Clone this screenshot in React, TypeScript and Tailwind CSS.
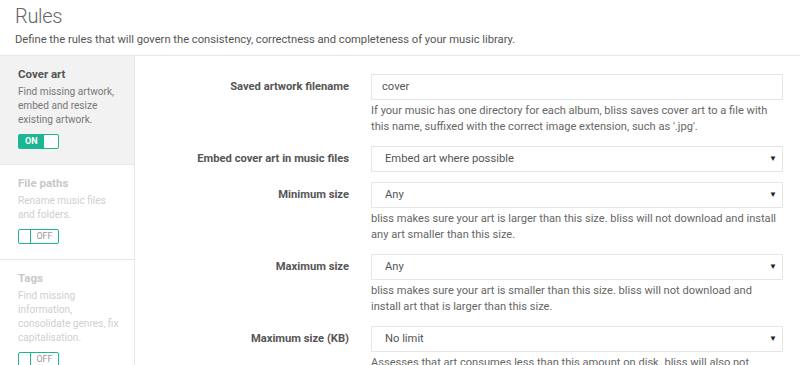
const font = { fontFamily: 'Roboto, "Liberation Sans", sans-serif' };

interface Section {
  title: string;
  lines: string[];
  on: boolean;
}

const sections: Section[] = [
  { title: 'Cover art', lines: ['Find missing artwork,', 'embed and resize', 'existing artwork.'], on: true },
  { title: 'File paths', lines: ['Rename music files', 'and folders.'], on: false },
  {
    title: 'Tags',
    lines: ['Find missing', 'information,', 'consolidate genres, fix', 'capitalisation.'],
    on: false,
  },
];

interface Field {
  label: string;
  value: string;
  select: boolean;
  help?: string[];
}

const fields: Field[] = [
  {
    label: 'Saved artwork filename',
    value: 'cover',
    select: false,
    help: [
      'If your music has one directory for each album, bliss saves cover art to a file with',
      "this name, suffixed with the correct image extension, such as '.jpg'.",
    ],
  },
  { label: 'Embed cover art in music files', value: 'Embed art where possible', select: true },
  {
    label: 'Minimum size',
    value: 'Any',
    select: true,
    help: [
      'bliss makes sure your art is larger than this size. bliss will not download and install',
      'any art smaller than this size.',
    ],
  },
  {
    label: 'Maximum size',
    value: 'Any',
    select: true,
    help: [
      'bliss makes sure your art is smaller than this size. bliss will not download and',
      'install art that is larger than this size.',
    ],
  },
  {
    label: 'Maximum size (KB)',
    value: 'No limit',
    select: true,
    help: [
      'Assesses that art consumes less than this amount on disk. bliss will also not',
      'download art that is larger than this size.',
    ],
  },
];

function Toggle({ on }: { on: boolean }) {
  if (on) {
    return (
      <div className="mt-[7px] flex h-[15px] w-[41px] items-center rounded-[2px] bg-[#1db592] p-[1px]">
        <span className="flex-1 pl-[6px] text-[9px] font-bold leading-none text-white">ON</span>
        <span className="h-[13px] w-[14px] rounded-[1px] bg-white" />
      </div>
    );
  }
  return (
    <div className="mt-[7px] flex h-[15px] w-[41px] items-center rounded-[2px] border border-[#1db592] bg-white">
      <span className="h-full w-[12px] border-r border-[#1db592]" />
      <span className="flex-1 text-center text-[9px] leading-none text-[#999]">OFF</span>
    </div>
  );
}

function SidebarItem({ section }: { section: Section }) {
  return (
    <div
      className={
        section.on
          ? 'border-b border-[#e8e8e8] bg-[#f2f2f2] px-[18px] pb-[15px] pt-[10px]'
          : 'border-b border-[#e8e8e8] bg-white px-[18px] pb-[15px] pt-[10px]'
      }
    >
      <h3
        className={
          section.on
            ? 'text-[11.5px] font-bold leading-4 text-[#555]'
            : 'text-[11.5px] font-bold leading-4 text-[#c8c8c8]'
        }
      >
        {section.title}
      </h3>
      <p
        className={
          section.on
            ? 'mt-[3px] whitespace-nowrap text-[10.1px] leading-[14px] text-[#777]'
            : 'mt-[3px] whitespace-nowrap text-[10.1px] leading-[14px] text-[#cfcfcf]'
        }
      >
        {section.lines.map((l) => (
          <span key={l} className="block">
            {l}
          </span>
        ))}
      </p>
      <Toggle on={section.on} />
    </div>
  );
}

function FieldRow({ field }: { field: Field }) {
  return (
    <div className={field.help ? 'mb-[11px] flex' : 'mb-[10px] flex'}>
      <div className="flex h-[26px] w-[214px] shrink-0 items-center justify-end text-[11.2px] font-bold text-[#555]">
        {field.label}
      </div>
      <div className="ml-[22px] w-[412px]">
        <div className="flex h-[26px] items-center border border-[#e6e6e6] bg-white pl-[10px] pr-[5px] text-[11.2px] text-[#555]">
          <span className={field.select ? 'flex-1 pl-[3px]' : 'flex-1'}>{field.value}</span>
          {field.select && <span className="text-[8px] text-[#222]">▼</span>}
        </div>
        {field.help && (
          <p className="mt-[3px] whitespace-nowrap text-[11.1px] leading-4 text-[#666]">
            {field.help.map((l) => (
              <span key={l} className="block">
                {l}
              </span>
            ))}
          </p>
        )}
      </div>
    </div>
  );
}

export default function App() {
  return (
    <div className="h-[365px] w-[800px] overflow-hidden bg-white" style={font}>
      <header className="border-b border-[#e8e8e8] px-[15px] pb-[7px] pt-[2px]">
        <h1 className="text-[20px] font-light leading-[28px] tracking-[-0.3px] text-[#666]">Rules</h1>
        <p className="mt-[2px] text-[11.2px] leading-4 text-[#555]">
          Define the rules that will govern the consistency, correctness and completeness of your music library.
        </p>
      </header>
      <div className="flex">
        <aside className="w-[135px] shrink-0 border-r border-[#e8e8e8]">
          {sections.map((s) => (
            <SidebarItem key={s.title} section={s} />
          ))}
        </aside>
        <main className="flex-1 pt-[18px]">
          {fields.map((f) => (
            <FieldRow key={f.label} field={f} />
          ))}
        </main>
      </div>
    </div>
  );
}
